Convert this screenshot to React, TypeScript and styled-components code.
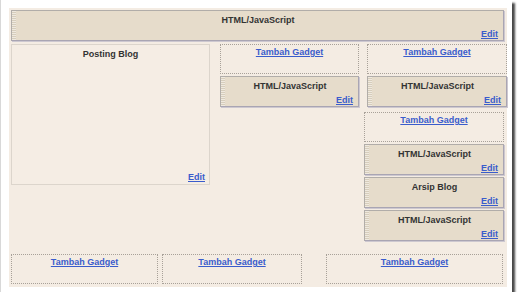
import { FC } from 'react';
import styled, { createGlobalStyle } from 'styled-components';

const GlobalStyle = createGlobalStyle`
    html, body {
        margin: 0;
        padding: 0;
        background: #fff;
    }
    body {
        font-family: "Liberation Sans", Arial, sans-serif;
    }
`;

const Frame = styled.div`
    width: 512px;
    height: 292px;
    box-sizing: border-box;
    padding: 8px 0 0 8px;
    background: #fff;
    border-left: 1px solid #d8d8d8;
    box-shadow: 3px 3px 2px rgba(40, 40, 40, .85);
`;

const Canvas = styled.main`
    width: 498px;
    height: 279px;
    box-sizing: border-box;
    padding: 2px 0 3px 2px;
    background: #f4ece3;
    display: flex;
    flex-direction: column;
`;

const MainRow = styled.section`
    display: flex;
    align-items: flex-start;
    margin-top: 3px;
`;

const Column = styled.div<{ $w: number; $ml?: number }>`
    width: ${p => p.$w}px;
    margin-left: ${p => p.$ml || 0}px;
    display: flex;
    flex-direction: column;
`;

const Group = styled.div<{ $pl?: number; $pr?: number; $mt?: number }>`
    display: flex;
    flex-direction: column;
    gap: 2px;
    padding-left: ${p => p.$pl || 0}px;
    padding-right: ${p => p.$pr || 0}px;
    margin-top: ${p => p.$mt || 0}px;
`;

const BottomRow = styled.section`
    margin-top: auto;
    display: flex;
`;

const Widget = styled.div<{ $mr?: number }>`
    height: 31px;
    margin-right: ${p => p.$mr || 0}px;
    box-sizing: border-box;
    border: 1px solid #b1ada9;
    border-right-color: #a9a5b3;
    border-bottom-color: #a9a5b3;
    background-color: #e6dccb;
    background-image: repeating-linear-gradient(to bottom, #efe9df 0 1px, #d6cdbc 1px 2px);
    background-size: 4px 100%;
    background-repeat: no-repeat;
    box-shadow: 1px 1px 0 #cdc8d0;
    display: flex;
    flex-direction: column;
    padding: 3px 5px 0 6px;
`;

const Title = styled.div`
    text-align: center;
    font-size: 9px;
    line-height: 12px;
    font-weight: 700;
    color: #333;
`;

const EditLink = styled.a`
    margin-top: auto;
    align-self: flex-end;
    font-size: 9px;
    line-height: 12px;
    font-weight: 700;
    color: #3a5ccc;
    text-decoration: underline;
    cursor: pointer;
`;

const PostBox = styled.div`
    height: 141px;
    box-sizing: border-box;
    border: 1px solid #dcd5cc;
    background: #f5ede4;
    display: flex;
    flex-direction: column;
    padding: 3px 4px 1px 4px;
`;

const AddBox = styled.div<{ $w?: number; $ml?: number }>`
    height: 30px;
    width: ${p => (p.$w ? p.$w + 'px' : 'auto')};
    margin-left: ${p => p.$ml || 0}px;
    box-sizing: border-box;
    border: 1px dotted #a8a199;
    text-align: center;
    padding-top: 1px;
    font-size: 9px;
    line-height: 12px;
`;

const AddLink = styled.a`
    font-weight: 700;
    color: #3a5ccc;
    text-decoration: underline;
    cursor: pointer;
`;

const Gadget: FC<{ title: string; mr?: number }> = ({ title, mr }) => (
    <Widget $mr={mr}>
        <Title>{title}</Title>
        <EditLink>Edit</EditLink>
    </Widget>
);

const Add: FC<{ w?: number; ml?: number }> = ({ w, ml }) => (
    <AddBox $w={w} $ml={ml}>
        <AddLink>Tambah Gadget</AddLink>
    </AddBox>
);

const App: FC = () => {
    return <>
        <GlobalStyle />
        <Frame>
            <Canvas>
                <Gadget title="HTML/JavaScript" mr={3} />
                <MainRow>
                    <Column $w={199}>
                        <PostBox>
                            <Title>Posting Blog</Title>
                            <EditLink>Edit</EditLink>
                        </PostBox>
                    </Column>
                    <Column $w={139} $ml={10}>
                        <Group>
                            <Add />
                            <Gadget title="HTML/JavaScript" />
                        </Group>
                    </Column>
                    <Column $w={143} $ml={5}>
                        <Group $pl={3}>
                            <Add />
                            <Gadget title="HTML/JavaScript" />
                        </Group>
                        <Group $pr={3} $mt={5}>
                            <Add />
                            <Gadget title="HTML/JavaScript" />
                            <Gadget title="Arsip Blog" />
                            <Gadget title="HTML/JavaScript" />
                        </Group>
                    </Column>
                </MainRow>
                <BottomRow>
                    <Add w={147} />
                    <Add w={140} ml={4} />
                    <Add w={177} ml={24} />
                </BottomRow>
            </Canvas>
        </Frame>
    </>
}

export default App;
